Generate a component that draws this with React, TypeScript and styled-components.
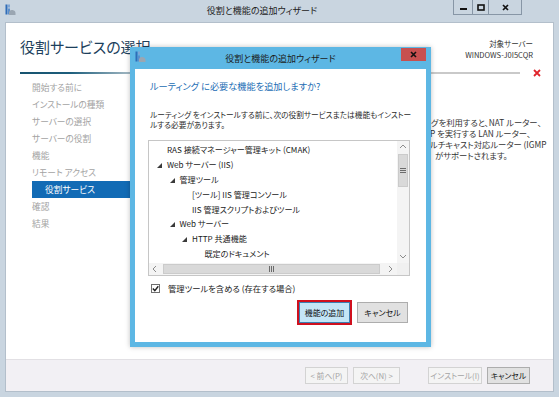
import styled, { createGlobalStyle } from 'styled-components';

const GlobalStyle = createGlobalStyle`
  html, body { margin: 0; padding: 0; background: #fff; }
  body {
    font-family: "Noto Sans CJK JP", "Noto Sans", sans-serif;
    font-feature-settings: "palt";
    color: #1e1e1e;
  }
`;

const Window = styled.div`
  position: relative;
  width: 559px;
  height: 397px;
  display: flex;
  flex-direction: column;
  background: #c9d5e0;
  overflow: hidden;
`;

const TitleBar = styled.div`
  height: 22px;
  flex-shrink: 0;
  display: grid;
  grid-template-columns: 30px 1fr auto;
  align-items: start;
  padding-right: 37px;
`;

const IconSlot = styled.div`
  padding: 4px 0 0 5px;
  line-height: 0;
`;

const WindowTitle = styled.div`
  font-size: 9px;
  line-height: 22px;
  text-align: center;
  padding-left: 40px;
  color: #222;
`;

const Controls = styled.div`
  display: flex;
`;

const CtrlButton = styled.div<{ $w: number }>`
  width: ${(p) => p.$w}px;
  height: 15px;
  box-sizing: border-box;
  border: 1px solid #8796a6;
  border-top: none;
  margin-left: -1px;
  display: flex;
  align-items: center;
  justify-content: center;
`;

const Client = styled.div`
  flex: 1;
  margin: 0 5px 5px;
  border: 1px solid #b3bfcb;
  display: flex;
  flex-direction: column;
  min-height: 0;
`;

const Body = styled.div`
  flex: 1;
  background: #fff;
  display: flex;
  flex-direction: column;
  border-bottom: 1px solid #e2e0e4;
`;

const Header = styled.div`
  height: 46px;
  box-sizing: border-box;
  display: flex;
  justify-content: space-between;
  align-items: flex-start;
  padding: 13px 20px 0 14px;
`;

const PageTitle = styled.h1`
  margin: 0;
  font-size: 15px;
  font-weight: 400;
  line-height: 22px;
  color: #1d3f5c;
`;

const ServerInfo = styled.div`
  margin-top: 2px;
  text-align: right;
  font-size: 7.5px;
  line-height: 11px;
  color: #333;
`;

const RuleRow = styled.div`
  height: 8px;
  display: flex;
  align-items: center;
  padding: 0 12px 0 14px;
`;

const Rule = styled.div`
  flex: 1;
  height: 2px;
  margin-right: 13px;
  background: linear-gradient(to right, #17536f 0, #1d5e7c 10%, #b9c7cf 24%, #c9c9c9 40%, #c9c9c9 100%);
`;

const Content = styled.div`
  flex: 1;
  display: flex;
`;

const Nav = styled.div`
  width: 144px;
  padding: 1.5px 0 0 26px;
  box-sizing: border-box;
  display: flex;
  flex-direction: column;
`;

const NavItem = styled.div<{ $active?: boolean; $sub?: boolean }>`
  height: 17px;
  line-height: 17px;
  font-size: 8.7px;
  padding-left: ${(p) => (p.$sub ? 13 : 0)}px;
  color: ${(p) => (p.$active ? '#fff' : '#a3a3a3')};
  background: ${(p) => (p.$active ? '#126bb5' : 'transparent')};
`;

const Services = styled.div`
  flex: 1;
`;

/* only the part of the description to the right of the dialog is visible */
const DescPane = styled.div`
  width: 123px;
  padding-top: 39.5px;
  font-size: 8.3px;
  line-height: 11px;
  color: #333;
`;

const DescLine = styled.div<{ $indent: number }>`
  white-space: nowrap;
  padding-left: ${(p) => p.$indent}px;
`;

const BottomBar = styled.div`
  height: 31px;
  flex-shrink: 0;
  background: #f2f0f4;
  display: flex;
  justify-content: flex-end;
  align-items: flex-start;
  padding: 7px 23px 0 0;
  box-sizing: border-box;
  gap: 5px;
`;

const WizButton = styled.div<{ $w: number; $disabled?: boolean; $gap?: number }>`
  width: ${(p) => p.$w}px;
  height: 17px;
  box-sizing: border-box;
  margin-left: ${(p) => p.$gap ?? 0}px;
  border: 1px solid ${(p) => (p.$disabled ? '#d3d3d3' : '#adadad')};
  background: ${(p) => (p.$disabled ? '#f4f4f4' : '#e1e1e1')};
  color: ${(p) => (p.$disabled ? '#a4a4a4' : '#111')};
  font-size: 7.8px;
  line-height: 15px;
  text-align: center;
  white-space: nowrap;
`;

/* modal dialog lying over the wizard */
const Dialog = styled.div`
  position: absolute;
  left: 130px;
  top: 47px;
  width: 301px;
  height: 300px;
  box-sizing: border-box;
  background: #5db7e4;
  padding: 0 5px 5px;
  display: flex;
  flex-direction: column;
  box-shadow: 0 0 5px rgba(0, 0, 0, 0.25);
`;

const DialogBar = styled.div`
  height: 22px;
  flex-shrink: 0;
  margin: 0 -5px;
  display: grid;
  grid-template-columns: 30px 1fr 30px;
  align-items: start;
`;

const DialogTitle = styled.div`
  font-size: 9px;
  line-height: 22px;
  padding-top: 1px;
  text-align: center;
  color: #1b1b1b;
`;

const CloseButton = styled.div`
  width: 25px;
  height: 13px;
  margin-top: 1px;
  background: #c75050;
  display: flex;
  align-items: center;
  justify-content: center;
  justify-self: start;
`;

const DialogBody = styled.div`
  flex: 1;
  background: #fff;
  padding: 10px 16px 0 13px;
  display: flex;
  flex-direction: column;
`;

const Question = styled.div`
  font-size: 9.2px;
  line-height: 14px;
  color: #1b6db4;
  padding-left: 2px;
`;

const Note = styled.p`
  margin: 16.75px 0 0;
  padding-left: 2px;
  font-size: 7.7px;
  line-height: 10.5px;
  color: #2b2b2b;
  white-space: nowrap;
`;

const TreeBox = styled.div`
  margin-top: 9.25px;
  height: 136px;
  box-sizing: border-box;
  border: 1px solid #c6c6c6;
  display: grid;
  grid-template-columns: 1fr 12px;
  grid-template-rows: 1fr 12px;
`;

const TreeView = styled.div`
  overflow: hidden;
  padding-top: 1.6px;
`;

const TreeRow = styled.div<{ $level: number }>`
  height: 14.8px;
  display: flex;
  align-items: center;
  padding-left: ${(p) => 8 + p.$level * 12.5}px;
  font-size: 8.1px;
  color: #222;
  white-space: nowrap;
`;

const Expander = styled.span`
  width: 10px;
  flex-shrink: 0;
  line-height: 0;
  padding-top: 2px;
`;

const VScroll = styled.div`
  background: #f4f4f4;
  display: flex;
  flex-direction: column;
  align-items: center;
`;

const HScroll = styled.div`
  background: #f4f4f4;
  display: flex;
  align-items: center;
`;

const ArrowBox = styled.div`
  width: 12px;
  height: 12px;
  flex-shrink: 0;
  display: flex;
  align-items: center;
  justify-content: center;
`;

const VThumb = styled.div`
  width: 10px;
  height: 33px;
  margin-top: 1px;
  background: #d9d9d9;
  border: 1px solid #cbcbcb;
  box-sizing: border-box;
  display: flex;
  align-items: center;
  justify-content: center;
`;

const HThumb = styled.div`
  width: 217px;
  height: 10px;
  margin-left: 2px;
  background: #d9d9d9;
  border: 1px solid #cbcbcb;
  box-sizing: border-box;
  display: flex;
  align-items: center;
  justify-content: center;
`;

const Spacer = styled.div`
  flex: 1;
`;

const Corner = styled.div`
  background: #f0f0f0;
`;

const CheckRow = styled.label`
  margin-top: 6px;
  height: 12px;
  display: flex;
  align-items: center;
  gap: 8px;
  padding-left: 3px;
  font-size: 8.3px;
  color: #222;
`;

const CheckBox = styled.span`
  width: 9px;
  height: 9px;
  box-sizing: border-box;
  border: 1px solid #6f6f6f;
  background: #fff;
  display: flex;
  align-items: center;
  justify-content: center;
`;

const ButtonRow = styled.div`
  margin-top: 8px;
  display: flex;
  justify-content: flex-end;
  gap: 7px;
  padding-right: 2px;
`;

const DlgButton = styled.div<{ $primary?: boolean }>`
  width: 51px;
  height: 21px;
  box-sizing: border-box;
  border: 1px solid ${(p) => (p.$primary ? '#3c7fb1' : '#adadad')};
  background: ${(p) => (p.$primary ? '#c4e5f6' : '#e1e1e1')};
  outline: ${(p) => (p.$primary ? '2px solid #d0101e' : 'none')};
  font-size: 8px;
  line-height: 19px;
  text-align: center;
  color: #111;
`;

const ServerIcon = () => (
  <svg width="11" height="12" viewBox="0 0 11 12">
    <rect x="0.5" y="0.5" width="2" height="10" fill="#2f6db8" />
    <rect x="3" y="0.5" width="2" height="3" fill="#7fa6d6" />
    <rect x="3" y="4.5" width="2" height="6" fill="#5a8fce" />
    <path d="M4 11 L4 8 Q5 5.5 7.5 6 Q10.5 6.5 10.5 9 L10.5 11 Z" fill="#9aa6b2" />
  </svg>
);

const Triangle = () => (
  <svg width="5" height="5" viewBox="0 0 5 5">
    <polygon points="5,0 5,5 0,5" fill="#3a3a3a" />
  </svg>
);

const Chevron = ({ dir }: { dir: 'up' | 'down' | 'left' | 'right' }) => {
  const d = {
    up: 'M1 5 L4 2 L7 5',
    down: 'M1 2 L4 5 L7 2',
    left: 'M5 1 L2 4 L5 7',
    right: 'M2 1 L5 4 L2 7',
  }[dir];
  return (
    <svg width="8" height="8" viewBox="0 0 8 8">
      <path d={d} fill="none" stroke="#8c8c8c" strokeWidth="1" />
    </svg>
  );
};

const tree = [
  { level: 0, text: 'RAS 接続マネージャー管理キット (CMAK)' },
  { level: 0, text: 'Web サーバー (IIS)', open: true },
  { level: 1, text: '管理ツール', open: true },
  { level: 2, text: '[ツール] IIS 管理コンソール' },
  { level: 2, text: 'IIS 管理スクリプトおよびツール' },
  { level: 1, text: 'Web サーバー', open: true },
  { level: 2, text: 'HTTP 共通機能', open: true },
  { level: 3, text: '既定のドキュメント' },
  { level: 3, text: 'ディレクトリの参照' },
];

const navItems = [
  { label: '開始する前に' },
  { label: 'インストールの種類' },
  { label: 'サーバーの選択' },
  { label: 'サーバーの役割' },
  { label: '機能' },
  { label: 'リモート アクセス' },
  { label: '役割サービス', sub: true, active: true },
  { label: '確認' },
  { label: '結果' },
];

const description: [number, string][] = [
  [1, 'グを利用すると、NAT ルーター、'],
  [0, 'P を実行する LAN ルーター、'],
  [0, 'ルチキャスト対応ルーター (IGMP'],
  [5, 'がサポートされます。'],
];

export default function App() {
  return (
    <>
      <GlobalStyle />
      <Window>
        <TitleBar>
          <IconSlot>
            <ServerIcon />
          </IconSlot>
          <WindowTitle>役割と機能の追加ウィザード</WindowTitle>
          <Controls>
            <CtrlButton $w={20}>
              <svg width="7" height="7" viewBox="0 0 7 7">
                <rect x="0" y="4" width="7" height="2" fill="#111" />
              </svg>
            </CtrlButton>
            <CtrlButton $w={17}>
              <svg width="8" height="7" viewBox="0 0 8 7">
                <rect x="1" y="1" width="6" height="5" fill="none" stroke="#111" strokeWidth="1.6" />
              </svg>
            </CtrlButton>
            <CtrlButton $w={34}>
              <svg width="7" height="7" viewBox="0 0 7 7">
                <path d="M1 1 L6 6 M6 1 L1 6" stroke="#111" strokeWidth="1.7" />
              </svg>
            </CtrlButton>
          </Controls>
        </TitleBar>

        <Client>
          <Body>
            <Header>
              <PageTitle>役割サービスの選択</PageTitle>
              <ServerInfo>
                <div>対象サーバー</div>
                <div>WINDOWS-J0I5CQR</div>
              </ServerInfo>
            </Header>
            <RuleRow>
              <Rule />
              <svg width="8" height="8" viewBox="0 0 8 8">
                <path d="M1 1 L7 7 M7 1 L1 7" stroke="#e0242b" strokeWidth="1.8" />
              </svg>
            </RuleRow>
            <Content>
              <Nav>
                {navItems.map((n) => (
                  <NavItem key={n.label} $active={n.active} $sub={n.sub}>
                    {n.label}
                  </NavItem>
                ))}
              </Nav>
              <Services />
              <DescPane>
                {description.map(([indent, text]) => (
                  <DescLine key={text} $indent={indent}>
                    {text}
                  </DescLine>
                ))}
              </DescPane>
            </Content>
          </Body>
          <BottomBar>
            <WizButton $w={43} $disabled>&lt; 前へ(P)</WizButton>
            <WizButton $w={47} $disabled>次へ(N) &gt;</WizButton>
            <WizButton $w={54} $disabled $gap={23}>インストール(I)</WizButton>
            <WizButton $w={43}>キャンセル</WizButton>
          </BottomBar>
        </Client>

        <Dialog>
          <DialogBar>
            <IconSlot>
              <ServerIcon />
            </IconSlot>
            <DialogTitle>役割と機能の追加ウィザード</DialogTitle>
            <CloseButton>
              <svg width="7" height="7" viewBox="0 0 7 7">
                <path d="M1 1 L6 6 M6 1 L1 6" stroke="#111" strokeWidth="1.6" />
              </svg>
            </CloseButton>
          </DialogBar>
          <DialogBody>
            <Question>ルーティング に必要な機能を追加しますか?</Question>
            <Note>
              ルーティング をインストールする前に、次の役割サービスまたは機能もインストー
              <br />
              ルする必要があります。
            </Note>
            <TreeBox>
              <TreeView>
                {tree.map((r) => (
                  <TreeRow key={r.text} $level={r.level}>
                    <Expander>{r.open && <Triangle />}</Expander>
                    {r.text}
                  </TreeRow>
                ))}
              </TreeView>
              <VScroll>
                <ArrowBox>
                  <Chevron dir="up" />
                </ArrowBox>
                <VThumb>
                  <svg width="6" height="5" viewBox="0 0 6 5">
                    <path d="M0 0.5 H6 M0 2.5 H6 M0 4.5 H6" stroke="#6b6b6b" strokeWidth="1" />
                  </svg>
                </VThumb>
                <Spacer />
                <ArrowBox>
                  <Chevron dir="down" />
                </ArrowBox>
              </VScroll>
              <HScroll>
                <ArrowBox>
                  <Chevron dir="left" />
                </ArrowBox>
                <HThumb>
                  <svg width="5" height="6" viewBox="0 0 5 6">
                    <path d="M0.5 0 V6 M2.5 0 V6 M4.5 0 V6" stroke="#6b6b6b" strokeWidth="1" />
                  </svg>
                </HThumb>
                <Spacer />
                <ArrowBox>
                  <Chevron dir="right" />
                </ArrowBox>
              </HScroll>
              <Corner />
            </TreeBox>
            <CheckRow>
              <CheckBox>
                <svg width="7" height="7" viewBox="0 0 7 7">
                  <path d="M0.8 3.6 L2.8 5.6 L6.3 1.2" fill="none" stroke="#222" strokeWidth="1.4" />
                </svg>
              </CheckBox>
              管理ツールを含める (存在する場合)
            </CheckRow>
            <ButtonRow>
              <DlgButton $primary>機能の追加</DlgButton>
              <DlgButton>キャンセル</DlgButton>
            </ButtonRow>
          </DialogBody>
        </Dialog>
      </Window>
    </>
  );
}
